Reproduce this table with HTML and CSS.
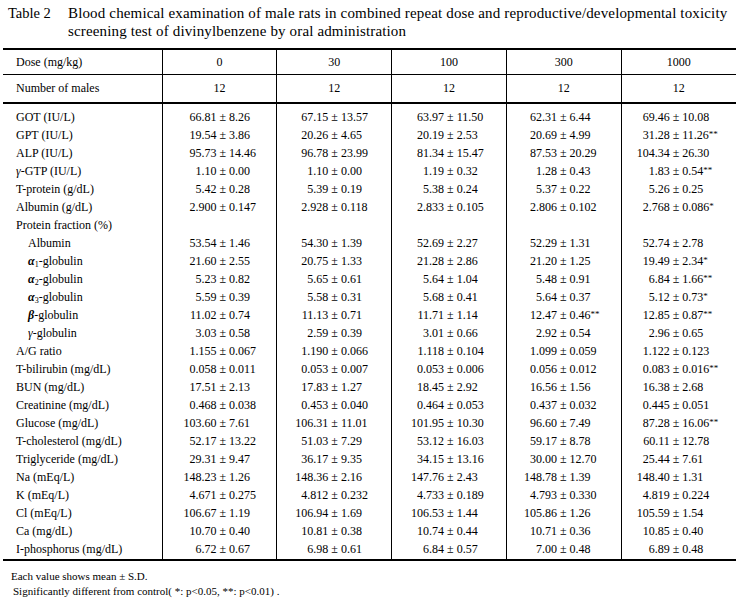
FILE: index.html
```html
<!DOCTYPE html>
<html lang="en">
<head>
<meta charset="utf-8">
<title>Table 2</title>
<link rel="stylesheet" href="styles.css">
</head>
<body>
<div class="page">
  <div class="title">
    <span class="tno">Table 2</span>
    <span class="ttext">Blood chemical examination of male rats in combined repeat dose and reproductive/developmental toxicity screening test of divinylbenzene by oral administration</span>
  </div>
  <table class="data">
    <colgroup>
      <col class="c0"><col class="cv"><col class="cv"><col class="cv"><col class="cv"><col class="cv">
    </colgroup>
    <thead>
      <tr class="h1"><th class="lab">Dose (mg/kg)</th><th>0</th><th>30</th><th>100</th><th>300</th><th>1000</th></tr>
      <tr class="h2"><th class="lab">Number of males</th><th>12</th><th>12</th><th>12</th><th>12</th><th>12</th></tr>
    </thead>
    <tbody>
      <tr class="first"><td class="lab">GOT (IU/L)</td><td><span class="m">66.81</span> ± 8.26</td><td><span class="m">67.15</span> ± 13.57</td><td><span class="m">63.97</span> ± 11.50</td><td><span class="m">62.31</span> ± 6.44</td><td><span class="m">69.46</span> ± 10.08</td></tr>
      <tr><td class="lab">GPT (IU/L)</td><td><span class="m">19.54</span> ± 3.86</td><td><span class="m">20.26</span> ± 4.65</td><td><span class="m">20.19</span> ± 2.53</td><td><span class="m">20.69</span> ± 4.99</td><td><span class="m">31.28</span> ± 11.26<span class="s">**</span></td></tr>
      <tr><td class="lab">ALP (IU/L)</td><td><span class="m">95.73</span> ± 14.46</td><td><span class="m">96.78</span> ± 23.99</td><td><span class="m">81.34</span> ± 15.47</td><td><span class="m">87.53</span> ± 20.29</td><td><span class="m">104.34</span> ± 26.30</td></tr>
      <tr><td class="lab"><i>γ</i>-GTP (IU/L)</td><td><span class="m">1.10</span> ± 0.00</td><td><span class="m">1.10</span> ± 0.00</td><td><span class="m">1.19</span> ± 0.32</td><td><span class="m">1.28</span> ± 0.43</td><td><span class="m">1.83</span> ± 0.54<span class="s">**</span></td></tr>
      <tr><td class="lab">T-protein (g/dL)</td><td><span class="m">5.42</span> ± 0.28</td><td><span class="m">5.39</span> ± 0.19</td><td><span class="m">5.38</span> ± 0.24</td><td><span class="m">5.37</span> ± 0.22</td><td><span class="m">5.26</span> ± 0.25</td></tr>
      <tr><td class="lab">Albumin (g/dL)</td><td><span class="m">2.900</span> ± 0.147</td><td><span class="m">2.928</span> ± 0.118</td><td><span class="m">2.833</span> ± 0.105</td><td><span class="m">2.806</span> ± 0.102</td><td><span class="m">2.768</span> ± 0.086<span class="s">*</span></td></tr>
      <tr><td class="lab">Protein fraction (%)</td><td></td><td></td><td></td><td></td><td></td></tr>
      <tr><td class="lab sub">Albumin</td><td><span class="m">53.54</span> ± 1.46</td><td><span class="m">54.30</span> ± 1.39</td><td><span class="m">52.69</span> ± 2.27</td><td><span class="m">52.29</span> ± 1.31</td><td><span class="m">52.74</span> ± 2.78</td></tr>
      <tr><td class="lab sub"><b class="g">α</b><sub>1</sub>-globulin</td><td><span class="m">21.60</span> ± 2.55</td><td><span class="m">20.75</span> ± 1.33</td><td><span class="m">21.28</span> ± 2.86</td><td><span class="m">21.20</span> ± 1.25</td><td><span class="m">19.49</span> ± 2.34<span class="s">*</span></td></tr>
      <tr><td class="lab sub"><b class="g">α</b><sub>2</sub>-globulin</td><td><span class="m">5.23</span> ± 0.82</td><td><span class="m">5.65</span> ± 0.61</td><td><span class="m">5.64</span> ± 1.04</td><td><span class="m">5.48</span> ± 0.91</td><td><span class="m">6.84</span> ± 1.66<span class="s">**</span></td></tr>
      <tr><td class="lab sub"><b class="g">α</b><sub>3</sub>-globulin</td><td><span class="m">5.59</span> ± 0.39</td><td><span class="m">5.58</span> ± 0.31</td><td><span class="m">5.68</span> ± 0.41</td><td><span class="m">5.64</span> ± 0.37</td><td><span class="m">5.12</span> ± 0.73<span class="s">*</span></td></tr>
      <tr><td class="lab sub"><b class="g">β</b>-globulin</td><td><span class="m">11.02</span> ± 0.74</td><td><span class="m">11.13</span> ± 0.71</td><td><span class="m">11.71</span> ± 1.14</td><td><span class="m">12.47</span> ± 0.46<span class="s">**</span></td><td><span class="m">12.85</span> ± 0.87<span class="s">**</span></td></tr>
      <tr><td class="lab sub"><i>γ</i>-globulin</td><td><span class="m">3.03</span> ± 0.58</td><td><span class="m">2.59</span> ± 0.39</td><td><span class="m">3.01</span> ± 0.66</td><td><span class="m">2.92</span> ± 0.54</td><td><span class="m">2.96</span> ± 0.65</td></tr>
      <tr><td class="lab">A/G ratio</td><td><span class="m">1.155</span> ± 0.067</td><td><span class="m">1.190</span> ± 0.066</td><td><span class="m">1.118</span> ± 0.104</td><td><span class="m">1.099</span> ± 0.059</td><td><span class="m">1.122</span> ± 0.123</td></tr>
      <tr><td class="lab">T-bilirubin (mg/dL)</td><td><span class="m">0.058</span> ± 0.011</td><td><span class="m">0.053</span> ± 0.007</td><td><span class="m">0.053</span> ± 0.006</td><td><span class="m">0.056</span> ± 0.012</td><td><span class="m">0.083</span> ± 0.016<span class="s">**</span></td></tr>
      <tr><td class="lab">BUN (mg/dL)</td><td><span class="m">17.51</span> ± 2.13</td><td><span class="m">17.83</span> ± 1.27</td><td><span class="m">18.45</span> ± 2.92</td><td><span class="m">16.56</span> ± 1.56</td><td><span class="m">16.38</span> ± 2.68</td></tr>
      <tr><td class="lab">Creatinine (mg/dL)</td><td><span class="m">0.468</span> ± 0.038</td><td><span class="m">0.453</span> ± 0.040</td><td><span class="m">0.464</span> ± 0.053</td><td><span class="m">0.437</span> ± 0.032</td><td><span class="m">0.445</span> ± 0.051</td></tr>
      <tr><td class="lab">Glucose (mg/dL)</td><td><span class="m">103.60</span> ± 7.61</td><td><span class="m">106.31</span> ± 11.01</td><td><span class="m">101.95</span> ± 10.30</td><td><span class="m">96.60</span> ± 7.49</td><td><span class="m">87.28</span> ± 16.06<span class="s">**</span></td></tr>
      <tr><td class="lab">T-cholesterol (mg/dL)</td><td><span class="m">52.17</span> ± 13.22</td><td><span class="m">51.03</span> ± 7.29</td><td><span class="m">53.12</span> ± 16.03</td><td><span class="m">59.17</span> ± 8.78</td><td><span class="m">60.11</span> ± 12.78</td></tr>
      <tr><td class="lab">Triglyceride (mg/dL)</td><td><span class="m">29.31</span> ± 9.47</td><td><span class="m">36.17</span> ± 9.35</td><td><span class="m">34.15</span> ± 13.16</td><td><span class="m">30.00</span> ± 12.70</td><td><span class="m">25.44</span> ± 7.61</td></tr>
      <tr><td class="lab">Na (mEq/L)</td><td><span class="m">148.23</span> ± 1.26</td><td><span class="m">148.36</span> ± 2.16</td><td><span class="m">147.76</span> ± 2.43</td><td><span class="m">148.78</span> ± 1.39</td><td><span class="m">148.40</span> ± 1.31</td></tr>
      <tr><td class="lab">K (mEq/L)</td><td><span class="m">4.671</span> ± 0.275</td><td><span class="m">4.812</span> ± 0.232</td><td><span class="m">4.733</span> ± 0.189</td><td><span class="m">4.793</span> ± 0.330</td><td><span class="m">4.819</span> ± 0.224</td></tr>
      <tr><td class="lab">Cl (mEq/L)</td><td><span class="m">106.67</span> ± 1.19</td><td><span class="m">106.94</span> ± 1.69</td><td><span class="m">106.53</span> ± 1.44</td><td><span class="m">105.86</span> ± 1.26</td><td><span class="m">105.59</span> ± 1.54</td></tr>
      <tr><td class="lab">Ca (mg/dL)</td><td><span class="m">10.70</span> ± 0.40</td><td><span class="m">10.81</span> ± 0.38</td><td><span class="m">10.74</span> ± 0.44</td><td><span class="m">10.71</span> ± 0.36</td><td><span class="m">10.85</span> ± 0.40</td></tr>
      <tr class="last"><td class="lab">I-phosphorus (mg/dL)</td><td><span class="m">6.72</span> ± 0.67</td><td><span class="m">6.98</span> ± 0.61</td><td><span class="m">6.84</span> ± 0.57</td><td><span class="m">7.00</span> ± 0.48</td><td><span class="m">6.89</span> ± 0.48</td></tr>
    </tbody>
  </table>
  <div class="notes">
    <p class="n1">Each value shows mean ± S.D.</p>
    <p class="n2">Significantly different from control( *: p&lt;0.05, **: p&lt;0.01) .</p>
  </div>
</div>
</body>
</html>
```

FILE: styles.css
```css
html, body {
  margin: 0;
  padding: 0;
  background: #ffffff;
  color: #000000;
}

.page {
  width: 739px;
  font-family: "Liberation Serif", "Times New Roman", serif;
  padding: 4px 0 0 3px;
  box-sizing: border-box;
}

.title {
  display: flex;
  font-size: 15px;
  line-height: 18px;
  padding-left: 5px;
  height: 40px;
  margin-bottom: 4px;
}

.tno {
  flex: 0 0 60px;
  white-space: nowrap;
  font-size: 14.5px;
}

.ttext {
  flex: 1 1 auto;
  padding-right: 2px;
  letter-spacing: 0.15px;
}

.data {
  width: 733px;
  border-collapse: collapse;
  table-layout: fixed;
  font-size: 12px;
  border-top: 2px solid #000;
  border-bottom: 2px solid #000;
}

.c0 { width: 159px; }

.data th,
.data td {
  padding: 0;
  border-left: 1px solid #000;
  white-space: nowrap;
  font-weight: normal;
}

.data th.lab,
.data td.lab {
  border-left: none;
  text-align: left;
  padding-left: 13px;
}

.data td.sub { padding-left: 25px; }

.data thead th { text-align: center; }

.h1 th { height: 24px; border-bottom: 1px solid #000; }
.h2 th { height: 27px; border-bottom: 2px solid #000; }

.data tbody td { height: 18px; line-height: 18px; }
.data tbody tr.first td { padding-top: 4px; }
.data tbody tr.last td { padding-bottom: 1px; }

.m {
  display: inline-block;
  width: 48px;
  text-align: right;
}

.data tbody td:nth-child(2) { padding-left: 6px; }
.data tbody td:nth-child(3) { padding-left: 3px; }
.data tbody td:nth-child(4) { padding-left: 4px; }
.data tbody td:nth-child(5) { padding-left: 2px; }
.data tbody td:nth-child(6) { padding-left: 0; }

.s {
  font-size: 9px;
  vertical-align: 2px;
  line-height: 0;
}

.g { font-style: italic; font-weight: bold; }

sub {
  font-size: 8px;
  vertical-align: -2px;
  line-height: 0;
}

.notes {
  font-size: 11px;
  line-height: 15px;
  padding-top: 8px;
}

.notes p { margin: 0; }
.n1 { padding-left: 8px; }
.n2 { padding-left: 10px; }
```
